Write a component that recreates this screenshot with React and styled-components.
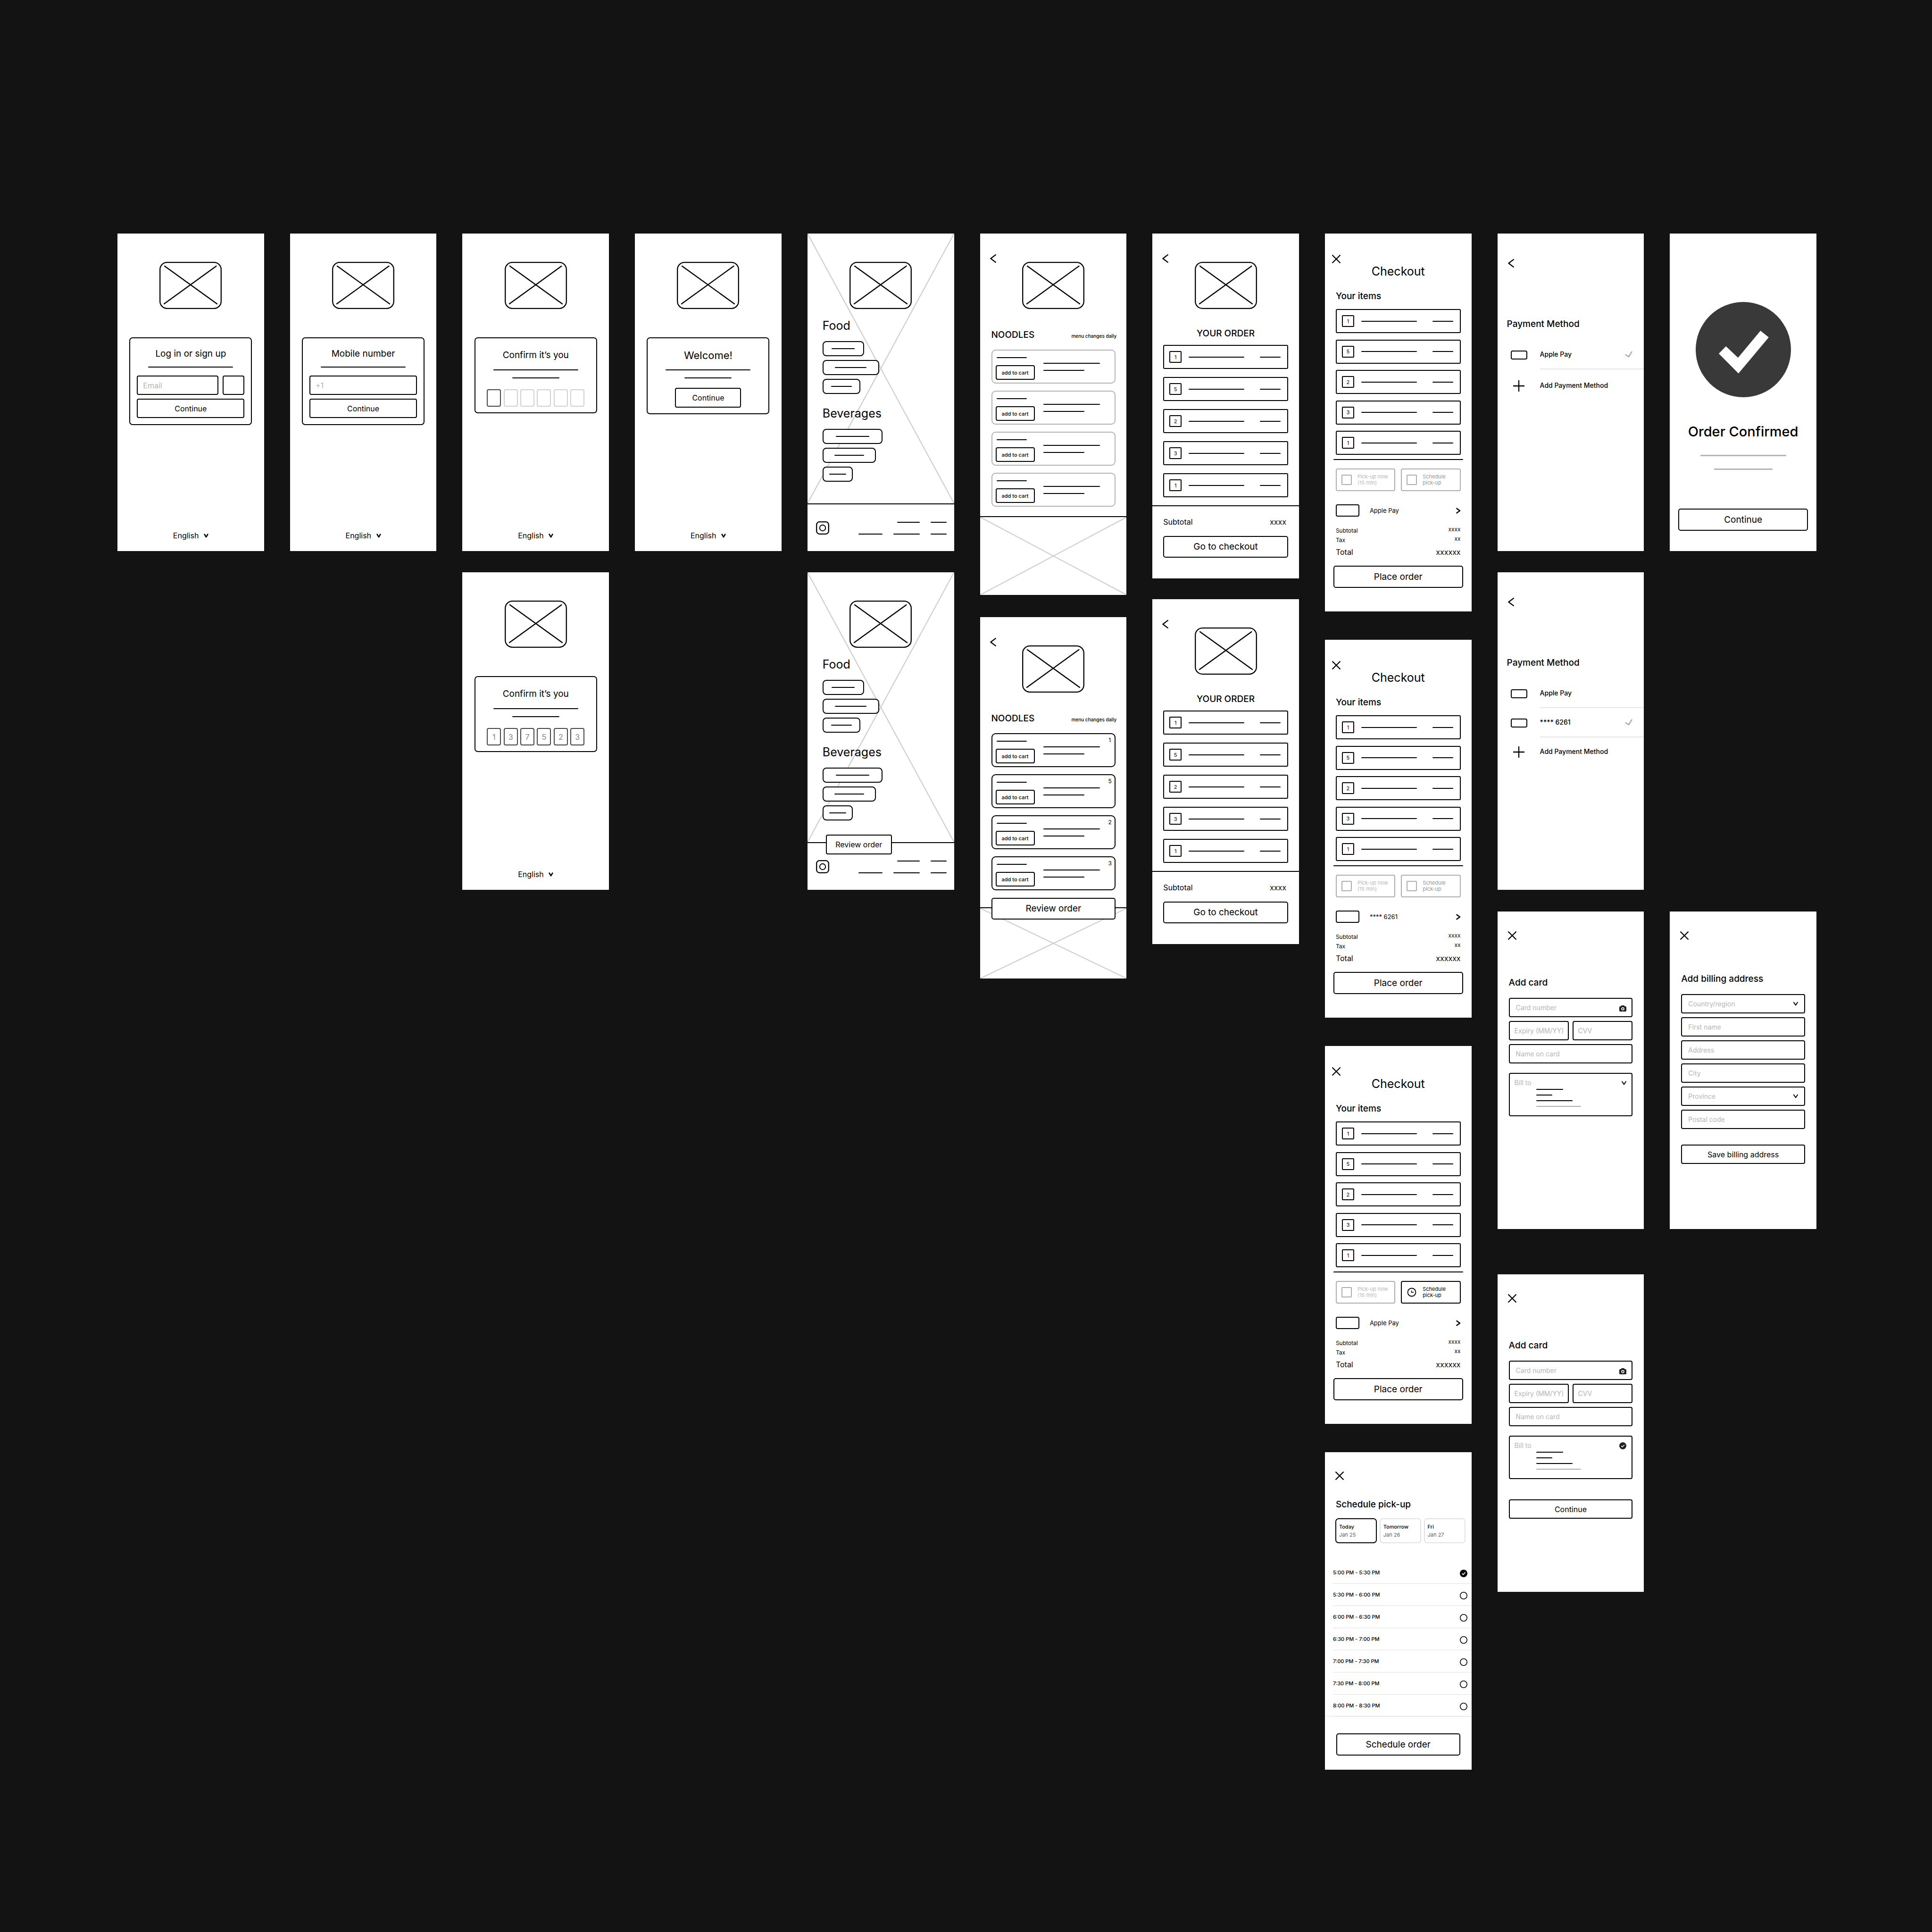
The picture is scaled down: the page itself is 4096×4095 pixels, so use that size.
import React from "react";
import styled, { createGlobalStyle, css } from "styled-components";

const GlobalStyle = createGlobalStyle`
  *, *::before, *::after { box-sizing: border-box; }
  body {
    margin: 0;
    background: #131313;
    color: #000;
    font-family: Inter, "Liberation Sans", sans-serif;
    font-size: 16px;
    line-height: 20px;
  }
  button, input, select {
    margin: 0;
    font: inherit;
    color: inherit;
  }
  h2, h3, p, ul, dl, dd, fieldset { margin: 0; padding: 0; border: 0; }
  ul { list-style: none; }
`;

/* ---------- board ---------- */

const Board = styled.main`
  min-height: 100vh;
  padding: 495px 245px 96px 249px;
  display: grid;
  grid-template-columns: repeat(10, minmax(0, 1fr));
  column-gap: 55px;
  align-items: start;
`;

const Column = styled.div`
  display: flex;
  flex-direction: column;
  gap: ${(p) => p.$gap || 45}px;
`;

const Stack = styled.div`
  display: flex;
  flex-direction: column;
  gap: ${(p) => p.$gap || 0}px;
`;

const Screen = styled.section`
  position: relative;
  display: flex;
  flex-direction: column;
  min-height: ${(p) => p.$height || 673}px;
  background: #fff;
  overflow: hidden;
`;

/* ---------- shared parts ---------- */

const Rule = styled.span`
  display: block;
  flex: none;
  width: ${(p) => (p.$width ? p.$width + "px" : "100%")};
  height: ${(p) => p.$weight || 2}px;
  border-radius: 1px;
  background: ${(p) => p.$color || "#000"};
`;

const Heading = styled.h2`
  font-size: 19px;
  line-height: 24px;
  font-weight: 500;
`;

const ActionButton = styled.button`
  display: block;
  width: 100%;
  height: ${(p) => p.$height || 46}px;
  padding: 0;
  border: 2px solid #000;
  border-radius: 5px;
  background: #fff;
  font-size: 19px;
  line-height: 24px;
`;

const SmallButton = styled(ActionButton)`
  width: ${(p) => (p.$width ? p.$width + "px" : "100%")};
  height: ${(p) => p.$height || 41}px;
  border-radius: 4px;
  font-size: 16px;
  line-height: 20px;
`;

const IconButton = styled.button`
  display: flex;
  align-self: flex-start;
  padding: 0;
  border: 0;
  background: none;
`;

const strokeProps = {
  fill: "none",
  stroke: "currentColor",
  strokeLinecap: "round",
  strokeLinejoin: "round",
};

const BackIcon = () => (
  <svg width="13" height="18" viewBox="0 0 13 18" {...strokeProps} strokeWidth="2.300">
    <path d="M11.800 1.200 1.400 9l10.400 7.800" />
  </svg>
);

const CloseIcon = () => (
  <svg width="18" height="18" viewBox="0 0 18 18" {...strokeProps} strokeWidth="2.300">
    <path d="M1.200 1.200l15.600 15.600M16.800 1.200 1.200 16.800" />
  </svg>
);

const DownIcon = ({ heavy }) => (
  <svg width="10" height="9" viewBox="0 0 10 9" {...strokeProps} strokeWidth={heavy ? 2.5 : 2}>
    {heavy ? <path d="M1.600 1.500 5 7.300 8.400 1.500" /> : <path d="M1 1.500 5 7.500 9 1.500" />}
  </svg>
);

const NextIcon = () => (
  <svg width="10" height="13" viewBox="0 0 10 13" {...strokeProps} strokeWidth="2.400">
    <path d="M1.400 1.700 8 6.500 1.400 11.300" />
  </svg>
);

const PlusIcon = () => (
  <svg width="24" height="24" viewBox="0 0 24 24" {...strokeProps} strokeWidth="2.300" strokeLinecap="butt">
    <path d="M12 0v24M0 12h24" />
  </svg>
);

const TickIcon = () => (
  <svg width="16" height="14" viewBox="0 0 16 14" fill="none" stroke="#a9a9a9" strokeWidth="2.500">
    <path d="M.8 7.500 8 12 15 .8" />
  </svg>
);

const CameraIcon = () => (
  <svg width="15" height="13" viewBox="0 0 15 13" fill="#222">
    <path
      fillRule="evenodd"
      d="M4.800 0h5.400l1.500 2H13a2 2 0 0 1 2 2v7a2 2 0 0 1-2 2H2a2 2 0 0 1-2-2V4a2 2 0 0 1 2-2h1.300zM7.500 4a3.300 3.300 0 1 0 0 6.600 3.300 3.300 0 0 0 0-6.600zm0 1.700a1.600 1.600 0 1 1 0 3.200 1.600 1.600 0 0 1 0-3.200z"
    />
  </svg>
);

const DotTickIcon = ({ size, color }) => (
  <svg width={size} height={size} viewBox="0 0 16 16">
    <circle cx="8" cy="8" r="8" fill={color} />
    <path d="M4.500 8.200 7 10.600l4.500-4.800" fill="none" stroke="#fff" strokeWidth="1.700" />
  </svg>
);

const ClockIcon = () => (
  <svg width="22" height="22" viewBox="0 0 22 22" {...strokeProps} strokeWidth="1.800">
    <circle cx="11" cy="11" r="8.500" />
    <path d="M10.600 7.200v4h4.600" strokeWidth="1.500" strokeLinecap="butt" strokeLinejoin="miter" />
  </svg>
);

const SocialIcon = () => (
  <svg width="28" height="28" viewBox="0 0 28 28" {...strokeProps} strokeWidth="2.300">
    <rect x="1.200" y="1.200" width="25.600" height="25.600" rx="6" />
    <circle cx="14" cy="14" r="6.200" strokeWidth="2" />
  </svg>
);

const LogoSvg = styled.svg`
  display: block;
  flex: none;
  align-self: center;
  margin-top: ${(p) => p.$top}px;
`;

const Logo = ({ top = 60 }) => (
  <LogoSvg $top={top} width="132" height="100" viewBox="0 0 132 100" {...strokeProps} strokeWidth="2.300">
    <rect x="1.200" y="1.200" width="129.600" height="97.600" rx="15" />
    <path d="M11 9 122 89M120.500 9 10 89" />
  </LogoSvg>
);

const CrossSvg = styled.svg`
  display: block;
  width: 100%;
  height: 100%;
`;

const Cross = () => (
  <CrossSvg viewBox="0 0 100 100" preserveAspectRatio="none" stroke="#d0d0d0" strokeWidth="2.300">
    <path d="M0 0 100 100M100 0 0 100" vectorEffect="non-scaling-stroke" />
  </CrossSvg>
);

/* ---------- sign-in screens ---------- */

const Card = styled.div`
  align-self: center;
  display: flex;
  flex-direction: column;
  align-items: center;
  width: 260px;
  margin-top: 60px;
  padding: ${(p) => (p.$form ? "21px 14px 13px" : "22px 14px 12px")};
  border: 2px solid #000;
  border-radius: 7px;
`;

const FormCard = styled(Card)`
  gap: 8px;
`;

const CardTitle = styled(Heading)`
  margin-bottom: ${(p) => p.$after}px;
  font-size: ${(p) => (p.$large ? 22 : 19)}px;
  line-height: ${(p) => (p.$after === 7 ? 24 : 28)}px;
  font-weight: 400;
`;

const TextField = styled.input`
  display: block;
  flex: 1;
  min-width: 0;
  width: 100%;
  height: 41px;
  flex-basis: ${(p) => (p.$row ? "0" : "auto")};
  padding: 0 4px 0 ${(p) => p.$pad || 11}px;
  border: 2px solid #000;
  border-radius: 4px;
  background: #fff;
  font-size: ${(p) => p.$size || 16}px;
  outline: none;
  &::placeholder { color: #b5b5b5; opacity: 1; }
`;

const FieldRow = styled.div`
  display: flex;
  gap: ${(p) => p.$gap || 8}px;
  width: 100%;
  margin-top: ${(p) => p.$top || 0}px;
`;

const SideButton = styled.button`
  flex: none;
  width: 46px;
  height: 41px;
  border: 2px solid #000;
  border-radius: 4px;
  background: #fff;
`;

const Lines = styled.div`
  display: flex;
  flex-direction: column;
  align-items: center;
  gap: 15px;
`;

const CodeRow = styled.div`
  display: flex;
  justify-content: space-between;
  width: 207px;
  margin-top: 23px;
`;

const CodeBox = styled.input`
  width: 30px;
  height: 37px;
  padding: 0;
  border: 2px solid ${(p) => (p.$on ? "#454545" : "#d0d0d0")};
  border-radius: 4px;
  background: #fff;
  color: #848484;
  font-size: 16px;
  text-align: center;
  outline: none;
`;

const WelcomeAction = styled.div`
  margin-top: 20px;
`;

const Language = styled.label`
  display: flex;
  align-items: center;
  align-self: center;
  gap: 10px;
  margin-top: auto;
  padding-bottom: 23px;
`;

const PlainSelect = styled.select`
  appearance: none;
  padding: 0;
  border: 0;
  background: none;
  line-height: 20px;
`;

const LanguagePicker = () => (
  <Language>
    <PlainSelect aria-label="Language">
      <option>English</option>
    </PlainSelect>
    <DownIcon heavy />
  </Language>
);

const LoginScreen = () => (
  <Screen>
    <Logo />
    <FormCard $form>
      <CardTitle $after={7}>Log in or sign up</CardTitle>
      <Rule $width={180} />
      <FieldRow $gap={9} $top={9}>
        <TextField $row aria-label="Email" placeholder="Email" />
        <SideButton type="button" aria-label="Other option" />
      </FieldRow>
      <SmallButton>Continue</SmallButton>
    </FormCard>
    <LanguagePicker />
  </Screen>
);

const MobileScreen = () => (
  <Screen>
    <Logo />
    <FormCard $form>
      <CardTitle $after={7}>Mobile number</CardTitle>
      <Rule $width={180} />
      <FieldRow $top={9}>
        <TextField aria-label="Mobile number" placeholder="+1" />
      </FieldRow>
      <SmallButton>Continue</SmallButton>
    </FormCard>
    <LanguagePicker />
  </Screen>
);

const ConfirmScreen = ({ code }) => (
  <Screen>
    <Logo />
    <Card>
      <CardTitle $after={16}>Confirm it’s you</CardTitle>
      <Lines>
        <Rule $width={180} />
        <Rule $width={100} />
      </Lines>
      <CodeRow>
        {[0, 1, 2, 3, 4, 5].map((i) => (
          <CodeBox
            key={i}
            aria-label={`Digit ${i + 1}`}
            defaultValue={code[i] || ""}
            $on={i <= code.length}
          />
        ))}
      </CodeRow>
    </Card>
    <LanguagePicker />
  </Screen>
);

const WelcomeScreen = () => (
  <Screen>
    <Logo />
    <Card>
      <CardTitle $large $after={16}>Welcome!</CardTitle>
      <Lines>
        <Rule $width={180} />
        <Rule $width={100} />
      </Lines>
      <WelcomeAction>
        <SmallButton $width={140} $height={42}>Continue</SmallButton>
      </WelcomeAction>
    </Card>
    <LanguagePicker />
  </Screen>
);

/* ---------- home ---------- */

const Hero = styled.div`
  position: relative;
  display: flex;
  flex-direction: column;
  height: 572px;
`;

const Backdrop = styled.div`
  position: absolute;
  inset: 0;
`;

const HeroBody = styled.div`
  position: relative;
  display: flex;
  flex-direction: column;
`;

const Categories = styled.div`
  display: flex;
  flex-direction: column;
  gap: 25px;
  padding: 19px 32px 0;
`;

const CategoryTitle = styled.h2`
  margin-bottom: 17px;
  font-size: 25px;
  line-height: 32px;
  font-weight: 400;
`;

const Pill = styled.button`
  display: flex;
  align-items: center;
  justify-content: center;
  width: ${(p) => p.$width}px;
  height: 32px;
  padding: 0;
  border: 2px solid #000;
  border-radius: 8px;
  background: #fff;
`;

const SiteFooter = styled.footer`
  position: relative;
  flex: 1;
  display: flex;
  align-items: flex-start;
  justify-content: space-between;
  padding: 36px 16px 0 18px;
  border-top: 2px solid #000;
`;

const FooterLinks = styled.div`
  display: flex;
  align-items: flex-end;
  gap: 23px;
  padding-top: 1px;
`;

const FooterColumn = styled.div`
  display: flex;
  flex-direction: column;
  align-items: flex-end;
  gap: 23px;
`;

const FloatingReview = styled.div`
  position: absolute;
  left: 39px;
  top: -18px;
`;

const categories = [
  { title: "Food", pills: [[88, 49], [120, 67], [80, 44]] },
  { title: "Beverages", pills: [[127, 71], [113, 63], [64, 36]] },
];

const HomeScreen = ({ review }) => (
  <Screen>
    <Hero>
      <Backdrop><Cross /></Backdrop>
      <HeroBody>
        <Logo />
        <Categories>
          {categories.map((c) => (
            <div key={c.title}>
              <CategoryTitle>{c.title}</CategoryTitle>
              <Stack $gap={8}>
                {c.pills.map(([w, l]) => (
                  <Pill key={w} $width={w} aria-label={`${c.title} item`}>
                    <Rule $width={l} />
                  </Pill>
                ))}
              </Stack>
            </div>
          ))}
        </Categories>
      </HeroBody>
    </Hero>
    <SiteFooter>
      <SocialIcon />
      <FooterLinks>
        <FooterColumn><Rule $width={51} /></FooterColumn>
        <FooterColumn><Rule $width={48} /><Rule $width={56} /></FooterColumn>
        <FooterColumn><Rule $width={34} /><Rule $width={34} /></FooterColumn>
      </FooterLinks>
      {review && (
        <FloatingReview>
          <SmallButton $width={140} $height={42}>Review order</SmallButton>
        </FloatingReview>
      )}
    </SiteFooter>
  </Screen>
);

/* ---------- menu ---------- */

const LogoBar = styled.header`
  display: grid;
  grid-template-columns: 1fr auto 1fr;
  align-items: start;
  padding: 44px 21px 0;
`;

const MenuHead = styled.div`
  display: flex;
  align-items: baseline;
  justify-content: space-between;
  padding: 43px 21px 0 24px;
`;

const MenuNote = styled.p`
  font-size: 10px;
  line-height: 12px;
  font-weight: 500;
`;

const MenuList = styled.ul`
  display: flex;
  flex-direction: column;
  gap: 15px;
  padding: 19px 23px 0 24px;
`;

const MenuItem = styled.li`
  display: grid;
  grid-template-columns: 83px 120px 1fr;
  column-gap: 18px;
  height: 72px;
  padding: 0 8px 0 7px;
  border: 2px solid ${(p) => (p.$on ? "#000" : "#b3b3b3")};
  border-radius: 9px;
`;

const MenuName = styled.div`
  display: flex;
  flex-direction: column;
  gap: 15px;
  padding-top: 14px;
`;

const MenuText = styled.div`
  display: flex;
  flex-direction: column;
  gap: 13px;
  padding-top: 26px;
`;

const NameRule = styled.div`
  padding-left: 2px;
`;

const AddButton = styled(SmallButton)`
  height: 31px;
  font-size: 11px;
  line-height: 14px;
  font-weight: 500;
`;

const Quantity = styled.span`
  justify-self: end;
  padding-top: 6px;
  font-size: 12px;
  line-height: 14px;
`;

const MenuBottom = styled.div`
  position: relative;
  flex: 1;
  margin-top: ${(p) => (p.$review ? 36 : 20)}px;
  border-top: 2px solid #000;
`;

const MenuCross = styled.div`
  position: absolute;
  inset: 0;
`;

const MenuReview = styled.div`
  position: absolute;
  left: 24px;
  right: 23px;
  top: -22px;
`;

const MenuScreen = ({ counts }) => (
  <Screen $height={766}>
    <LogoBar>
      <IconButton aria-label="Back"><BackIcon /></IconButton>
      <Logo top={16} />
    </LogoBar>
    <MenuHead>
      <Heading>NOODLES</Heading>
      <MenuNote>menu changes daily</MenuNote>
    </MenuHead>
    <MenuList>
      {[0, 1, 2, 3].map((i) => (
        <MenuItem key={i} $on={!!counts}>
          <MenuName>
            <NameRule><Rule $width={64} /></NameRule>
            <AddButton>add to cart</AddButton>
          </MenuName>
          <MenuText>
            <Rule $width={120} />
            <Rule $width={87} />
          </MenuText>
          {counts && <Quantity>{counts[i]}</Quantity>}
        </MenuItem>
      ))}
    </MenuList>
    <MenuBottom $review={!!counts}>
      <MenuCross><Cross /></MenuCross>
      {counts && <MenuReview><ActionButton>Review order</ActionButton></MenuReview>}
    </MenuBottom>
  </Screen>
);

/* ---------- order ---------- */

const OrderTitle = styled(Heading)`
  margin-top: 40px;
  text-align: center;
`;

const OrderList = styled.ul`
  display: flex;
  flex-direction: column;
  justify-content: space-between;
  height: ${(p) => p.$height}px;
  margin: ${(p) => p.$top}px 23px 0;
`;

const OrderItem = styled.li`
  display: flex;
  align-items: center;
  height: 51px;
  padding: 0 14px 0 11px;
  border: 2px solid #000;
  border-radius: 3px;
`;

const ItemCount = styled.span`
  display: flex;
  align-items: center;
  justify-content: center;
  width: 26px;
  height: 25px;
  margin-right: 15px;
  border: 2px solid #000;
  border-radius: 2px;
  font-size: 11px;
  line-height: 14px;
`;

const ItemPrice = styled.div`
  margin-left: auto;
`;

const amounts = [1, 5, 2, 3, 1];

const Items = ({ top, height }) => (
  <OrderList $top={top} $height={height}>
    {amounts.map((n, i) => (
      <OrderItem key={i}>
        <ItemCount>{n}</ItemCount>
        <Rule $width={118} />
        <ItemPrice><Rule $width={44} /></ItemPrice>
      </OrderItem>
    ))}
  </OrderList>
);

const OrderFooter = styled.footer`
  display: flex;
  flex-direction: column;
  gap: 20px;
  margin-top: 17px;
  padding: 23px 23px 0;
  border-top: 2px solid #000;
`;

const SumRow = styled.div`
  display: flex;
  justify-content: space-between;
  padding-right: 4px;
`;

const OrderScreen = () => (
  <Screen $height={731}>
    <LogoBar>
      <IconButton aria-label="Back"><BackIcon /></IconButton>
      <Logo top={16} />
    </LogoBar>
    <OrderTitle>YOUR ORDER</OrderTitle>
    <Items top={12} height={323} />
    <OrderFooter>
      <SumRow><span>Subtotal</span><span>xxxx</span></SumRow>
      <ActionButton>Go to checkout</ActionButton>
    </OrderFooter>
  </Screen>
);

/* ---------- checkout ---------- */

const CloseBar = styled.header`
  display: flex;
  padding: ${(p) => p.$top}px 23px 0 ${(p) => p.$left || 22}px;
`;

const CheckoutTitle = styled.h2`
  margin-top: 1px;
  text-align: center;
  font-size: 25px;
  line-height: 32px;
  font-weight: 400;
`;

const ItemsTitle = styled(Heading)`
  margin: 25px 23px 0;
`;

const CheckoutRule = styled.div`
  margin: 9px 18px 0;
`;

const PickupOptions = styled.div`
  display: grid;
  grid-template-columns: 1fr 1fr;
  gap: 12px;
  margin: 18px 23px 0;
`;

const PickupOption = styled.label`
  display: flex;
  align-items: center;
  gap: 12px;
  height: 48px;
  padding-left: 10px;
  border: 2px solid ${(p) => (p.$on ? "#000" : "#adadad")};
  border-radius: 4px;
  color: ${(p) => (p.$on ? "#000" : p.$dim ? "#b8b8b8" : "#969696")};
  font-size: 11px;
  line-height: 13px;
`;

const PickupBox = styled.input`
  appearance: none;
  width: 22px;
  height: 22px;
  border: 2px solid #adadad;
  border-radius: 2px;
`;

const HiddenInput = styled.input`
  position: absolute;
  opacity: 0;
`;

const PayRow = styled.div`
  display: flex;
  align-items: center;
  height: 26px;
  margin: 28px 23px 0;
  font-size: 13px;
`;

const PayBadge = styled.span`
  width: 50px;
  height: 26px;
  margin-right: 22px;
  border: 2px solid #000;
  border-radius: 4px;
`;

const PayNext = styled.button`
  display: flex;
  margin-left: auto;
  padding: 0;
  border: 0;
  background: none;
`;

const Totals = styled.dl`
  margin: 20px 23px 0;
`;

const TotalRow = styled.div`
  display: flex;
  align-items: flex-start;
  justify-content: space-between;
  font-size: ${(p) => (p.$main ? 16 : 12)}px;
  line-height: 20px;
  margin-top: ${(p) => (p.$main ? 5 : 0)}px;
  dd { line-height: ${(p) => (p.$main ? 20 : 14)}px; }
`;

const PlaceOrder = styled.div`
  margin: 19px 18px 0;
`;

const CheckoutScreen = ({ method, scheduled }) => (
  <Screen $height={801}>
    <CloseBar $top={45} $left={15}>
      <IconButton aria-label="Close"><CloseIcon /></IconButton>
    </CloseBar>
    <CheckoutTitle>Checkout</CheckoutTitle>
    <ItemsTitle>Your items</ItemsTitle>
    <Items top={15} height={309} />
    <CheckoutRule><Rule /></CheckoutRule>
    <PickupOptions>
      <PickupOption $dim>
        <PickupBox type="checkbox" />
        <span>Pick-up now<br />(15 min)</span>
      </PickupOption>
      <PickupOption $on={scheduled}>
        {scheduled ? (
          <>
            <HiddenInput type="checkbox" defaultChecked />
            <ClockIcon />
          </>
        ) : (
          <PickupBox type="checkbox" />
        )}
        <span>Schedule<br />pick-up</span>
      </PickupOption>
    </PickupOptions>
    <PayRow>
      <PayBadge />
      <span>{method}</span>
      <PayNext aria-label="Change payment method"><NextIcon /></PayNext>
    </PayRow>
    <Totals>
      <TotalRow><dt>Subtotal</dt><dd>xxxx</dd></TotalRow>
      <TotalRow><dt>Tax</dt><dd>xx</dd></TotalRow>
      <TotalRow $main><dt>Total</dt><dd>xxxxxx</dd></TotalRow>
    </Totals>
    <PlaceOrder><ActionButton $height={47}>Place order</ActionButton></PlaceOrder>
  </Screen>
);

/* ---------- schedule ---------- */

const ScheduleTitle = styled(Heading)`
  margin: 40px 23px 0;
`;

const Days = styled.div`
  display: flex;
  justify-content: space-between;
  margin: 17px 13px 0 22px;
`;

const Day = styled.button`
  display: flex;
  flex-direction: column;
  align-items: flex-start;
  justify-content: center;
  width: 88px;
  height: 53px;
  padding: 0 6px;
  border: 2px solid ${(p) => (p.$on ? "#000" : "#e2e2e2")};
  border-radius: 7px;
  background: #fff;
  font-size: 11px;
  line-height: 17px;
  strong { font-weight: 500; }
  span { color: #5f5f5f; }
`;

const Slots = styled.fieldset`
  display: flex;
  flex-direction: column;
  margin: 39px 0 0 17px;
`;

const Slot = styled.label`
  position: relative;
  display: flex;
  align-items: center;
  justify-content: space-between;
  height: 47px;
  padding-right: 9px;
  border-bottom: 1px solid #e0e0e0;
  font-size: 11px;
  line-height: 14px;
  font-weight: 500;
  svg { margin-top: 4px; }
`;

const SlotMark = ({ on }) =>
  on ? (
    <DotTickIcon size={16} color="#000" />
  ) : (
    <svg width="16" height="16" viewBox="0 0 16 16" fill="none" stroke="#000" strokeWidth="1.600">
      <circle cx="8" cy="8" r="7.200" />
    </svg>
  );

const ScheduleFooter = styled.footer`
  flex: 1;
  padding: 35px 24px 0;
  background: #fff;
  box-shadow: 0 -1px 4px rgba(0, 0, 0, 0.1);
`;

const slots = [
  "5:00 PM - 5:30 PM",
  "5:30 PM - 6:00 PM",
  "6:00 PM - 6:30 PM",
  "6:30 PM - 7:00 PM",
  "7:00 PM - 7:30 PM",
  "7:30 PM - 8:00 PM",
  "8:00 PM - 8:30 PM",
];

const ScheduleScreen = () => (
  <Screen>
    <CloseBar $top={41}>
      <IconButton aria-label="Close"><CloseIcon /></IconButton>
    </CloseBar>
    <ScheduleTitle>Schedule pick-up</ScheduleTitle>
    <Days>
      <Day $on><strong>Today</strong><span>Jan 25</span></Day>
      <Day><strong>Tomorrow</strong><span>Jan 26</span></Day>
      <Day><strong>Fri</strong><span>Jan 27</span></Day>
    </Days>
    <Slots>
      {slots.map((s, i) => (
        <Slot key={s}>
          {s}
          <HiddenInput type="radio" name="slot" defaultChecked={i === 0} />
          <SlotMark on={i === 0} />
        </Slot>
      ))}
    </Slots>
    <ScheduleFooter><ActionButton $height={47}>Schedule order</ActionButton></ScheduleFooter>
  </Screen>
);

/* ---------- payment ---------- */

const PaymentTitle = styled(Heading)`
  margin: 108px 20px 22px;
`;

const PaymentRow = styled.li`
  display: grid;
  grid-template-columns: 90px 1fr;
  height: ${(p) => p.$height || 62}px;
`;

const PaymentMark = styled.div`
  display: flex;
  align-items: center;
  justify-content: center;
  padding-left: 1px;
`;

const PaymentBadge = styled.span`
  width: 35px;
  height: 19px;
  border: 2px solid #000;
  border-radius: 4px;
`;

const PaymentName = styled.div`
  display: flex;
  align-items: center;
  justify-content: space-between;
  padding-right: 24px;
  border-bottom: 2px solid ${(p) => (p.$last ? "transparent" : "#e6e6e6")};
  font-size: 14px;
  line-height: 18px;
  font-weight: 500;
`;

const PaymentScreen = ({ methods, selected, addHeight }) => (
  <Screen>
    <CloseBar $top={54}>
      <IconButton aria-label="Back"><BackIcon /></IconButton>
    </CloseBar>
    <PaymentTitle>Payment Method</PaymentTitle>
    <ul>
      {methods.map((m) => (
        <PaymentRow key={m}>
          <PaymentMark><PaymentBadge /></PaymentMark>
          <PaymentName>{m}{m === selected && <TickIcon />}</PaymentName>
        </PaymentRow>
      ))}
      <PaymentRow $height={addHeight}>
        <PaymentMark><PlusIcon /></PaymentMark>
        <PaymentName $last>Add Payment Method</PaymentName>
      </PaymentRow>
    </ul>
  </Screen>
);

/* ---------- confirmed ---------- */

const BigTick = styled.svg`
  display: block;
  margin: 145px auto 0;
`;

const ConfirmedTitle = styled.h2`
  margin-top: 55px;
  text-align: center;
  font-size: 29px;
  line-height: 36px;
  font-weight: 500;
`;

const ConfirmedLines = styled.div`
  display: flex;
  flex-direction: column;
  align-items: center;
  gap: 26px;
  margin-top: 31px;
`;

const ConfirmedAction = styled.div`
  margin: 82px 18px 0;
`;

const ConfirmedScreen = () => (
  <Screen>
    <BigTick width="202" height="202" viewBox="0 0 441 441">
      <circle cx="220.500" cy="220.500" r="220.500" fill="#393939" />
      <path d="M107 239 140 205 196 258 300 133 338 164 198 331z" fill="#fff" />
    </BigTick>
    <ConfirmedTitle>Order Confirmed</ConfirmedTitle>
    <ConfirmedLines>
      <Rule $width={182} $weight={3} $color="#b5b5b5" />
      <Rule $width={124} $weight={3} $color="#b5b5b5" />
    </ConfirmedLines>
    <ConfirmedAction><ActionButton $height={47}>Continue</ActionButton></ConfirmedAction>
  </Screen>
);

/* ---------- card and address forms ---------- */

const Form = styled.form`
  display: flex;
  flex-direction: column;
  margin: ${(p) => p.$top}px 24px 0;
`;

const FormTitle = styled(Heading)`
  margin-bottom: 20px;
`;

const Fields = styled.div`
  display: flex;
  flex-direction: column;
  gap: 8px;
`;

const IconField = styled.div`
  position: relative;
  display: flex;
  > svg {
    position: absolute;
    right: ${(p) => p.$right || 15}px;
    top: 50%;
    margin-top: -5px;
    pointer-events: none;
  }
`;

const fieldText = css`
  font-size: 14px;
  color: #b5b5b5;
`;

const SelectField = styled.select`
  appearance: none;
  width: 100%;
  height: 41px;
  padding: 0 13px;
  border: 2px solid #000;
  border-radius: 4px;
  background: #fff;
  ${fieldText}
`;

const BillBox = styled.div`
  display: flex;
  align-items: flex-start;
  gap: 12px;
  height: 92px;
  margin-top: 20px;
  padding: 10px 11px 0 10px;
  border: 2px solid #000;
  border-radius: 4px;
`;

const BillLabel = styled.span`
  line-height: 18px;
  width: 34px;
  white-space: nowrap;
  ${fieldText}
`;

const BillLines = styled.div`
  display: flex;
  flex-direction: column;
  gap: 10px;
  padding-top: 22px;
`;

const BillMark = styled.button`
  display: flex;
  align-items: center;
  height: 18px;
  margin-left: auto;
  padding: 0;
  border: 0;
  background: none;
`;

const FormAction = styled.div`
  margin-top: ${(p) => p.$top}px;
`;

const AddCardScreen = ({ complete }) => (
  <Screen>
    <CloseBar $top={42}>
      <IconButton aria-label="Close"><CloseIcon /></IconButton>
    </CloseBar>
    <Form $top={79}>
      <FormTitle>Add card</FormTitle>
      <Fields>
        <IconField $right={13}>
          <TextField $size={14} $pad={13} aria-label="Card number" placeholder="Card number" />
          <CameraIcon />
        </IconField>
        <FieldRow>
          <TextField $row $size={14} $pad={10} aria-label="Expiry" placeholder="Expiry (MM/YY)" />
          <TextField $row $size={14} $pad={9} aria-label="CVV" placeholder="CVV" />
        </FieldRow>
        <TextField $size={14} $pad={13} aria-label="Name on card" placeholder="Name on card" />
      </Fields>
      <BillBox>
        <BillLabel>Bill to</BillLabel>
        <BillLines>
          <Rule $width={57} />
          <Rule $width={34} />
          <Rule $width={77} />
          <Rule $width={95} $color="#adadad" />
        </BillLines>
        <BillMark type="button" aria-label="Choose billing address">
          {complete ? <DotTickIcon size={15} color="#222" /> : <DownIcon />}
        </BillMark>
      </BillBox>
      {complete && (
        <FormAction $top={43}>
          <SmallButton type="button">Continue</SmallButton>
        </FormAction>
      )}
    </Form>
  </Screen>
);

const addressFields = [
  ["Country/region", true],
  ["First name"],
  ["Address"],
  ["City"],
  ["Province", true],
  ["Postal code"],
];

const BillingScreen = () => (
  <Screen>
    <CloseBar $top={42}>
      <IconButton aria-label="Close"><CloseIcon /></IconButton>
    </CloseBar>
    <Form $top={71}>
      <FormTitle>Add billing address</FormTitle>
      <Fields>
        {addressFields.map(([name, pick]) =>
          pick ? (
            <IconField key={name}>
              <SelectField aria-label={name}>
                <option>{name}</option>
              </SelectField>
              <DownIcon />
            </IconField>
          ) : (
            <IconField key={name}>
              <TextField $size={14} $pad={13} aria-label={name} placeholder={name} />
            </IconField>
          )
        )}
      </Fields>
      <FormAction $top={33}>
        <SmallButton type="button">Save billing address</SmallButton>
      </FormAction>
    </Form>
  </Screen>
);

/* ---------- page ---------- */

export default function App() {
  return (
    <>
      <GlobalStyle />
      <Board>
        <Column><LoginScreen /></Column>
        <Column><MobileScreen /></Column>
        <Column>
          <ConfirmScreen code="" />
          <ConfirmScreen code="137523" />
        </Column>
        <Column><WelcomeScreen /></Column>
        <Column>
          <HomeScreen />
          <HomeScreen review />
        </Column>
        <Column $gap={47}>
          <MenuScreen />
          <MenuScreen counts={[1, 5, 2, 3]} />
        </Column>
        <Column $gap={44}>
          <OrderScreen />
          <OrderScreen />
        </Column>
        <Column $gap={60}>
          <CheckoutScreen method="Apple Pay" />
          <CheckoutScreen method="**** 6261" />
          <CheckoutScreen method="Apple Pay" scheduled />
          <ScheduleScreen />
        </Column>
        <Column $gap={96}>
          <Stack $gap={46}>
            <Stack $gap={45}>
              <PaymentScreen methods={["Apple Pay"]} selected="Apple Pay" addHeight={70} />
              <PaymentScreen methods={["Apple Pay", "**** 6261"]} selected="**** 6261" />
            </Stack>
            <AddCardScreen />
          </Stack>
          <AddCardScreen complete />
        </Column>
        <Column $gap={764}>
          <ConfirmedScreen />
          <BillingScreen />
        </Column>
      </Board>
    </>
  );
}
